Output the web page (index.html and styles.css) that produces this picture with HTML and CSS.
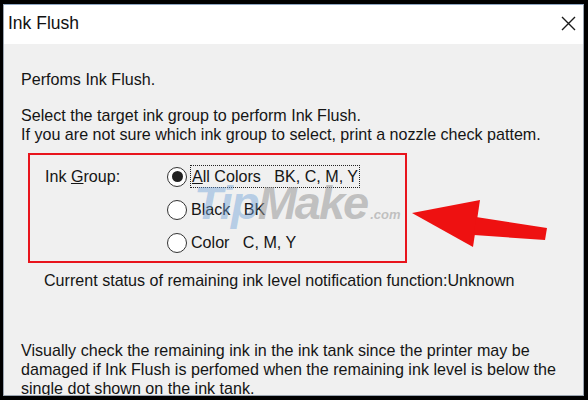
FILE: index.html
```html
<!DOCTYPE html>
<html lang="en">
<head>
  <meta charset="UTF-8">
  <meta name="viewport" content="width=device-width, initial-scale=1.0">
  <link rel="stylesheet" href="styles.css">
  <title>Ink Flush</title>
</head>
<body>
  <div class="window">
    <header class="title-bar">
      <h1>Ink Flush</h1>
      <svg class="close" width="15" height="15" viewBox="0 0 15 15">
        <path d="M1 1 L14 14 M14 1 L1 14" stroke="#1a1a1a" stroke-width="1.4" fill="none"/>
      </svg>
    </header>
    <main class="content">
      <p class="intro">Perfoms Ink Flush.</p>
      <p class="lead">Select the target ink group to perform Ink Flush.<br>If you are not sure which ink group to select, print a nozzle check pattem.</p>

      <section class="ink-group">
        <span class="group-label">Ink <u>G</u>roup:</span>
        <div class="options">
          <label class="option">
            <span class="radio checked"></span>
            <span class="focus"><u>A</u>ll Colors&nbsp;&nbsp; BK, C, M, Y</span>
          </label>
          <label class="option">
            <span class="radio"></span>
            <span>Black&nbsp;&nbsp; BK</span>
          </label>
          <label class="option">
            <span class="radio"></span>
            <span>Color&nbsp;&nbsp; C, M, Y</span>
          </label>
        </div>
      </section>

      <p class="status">Current status of remaining ink level notification function:Unknown</p>

      <p class="warning">Visually check the remaining ink in the ink tank since the printer may be<br>damaged if Ink Flush is perfomed when the remaining ink level is below the<br>single dot shown on the ink tank.</p>
    </main>

    <div class="watermark"><span class="tip">Tip</span>Make<small>.com</small></div>

    <svg class="arrow" width="150" height="60" viewBox="0 0 150 60">
      <polygon points="8,18 76,5 69,52" fill="#ee1111"/>
      <polygon points="72,22 143,33 141,45 70,40" fill="#ee1111"/>
    </svg>
  </div>
</body>
</html>
```

FILE: styles.css
```css
:root {
  --color-frame: #000;
  --color-border: #9aa4b0;
  --color-panel: #f0f0f0;
  --color-text: #151515;
  --color-red: #e8141c;
}

* {
  margin: 0;
  padding: 0;
  box-sizing: border-box;
}

html, body {
  width: 588px;
  height: 400px;
  overflow: hidden;
}

body {
  background-color: var(--color-frame);
  padding: 4px 4px 4px 3px;
  font-family: "Liberation Sans", Arial, sans-serif;
  font-size: 16.1px;
  color: var(--color-text);
}

.window {
  position: relative;
  height: 100%;
  border: 1px solid var(--color-border);
  border-top-color: #8ea6c2;
  background-color: var(--color-panel);
  overflow: hidden;
}

.title-bar {
  display: flex;
  align-items: center;
  justify-content: space-between;
  height: 39px;
  padding: 0 7px 3px 4px;
  background-color: #fff;
}

.title-bar h1 {
  font-size: 17.5px;
  font-weight: 400;
  color: #111;
}

.content {
  padding: 26px 0 0 17px;
  line-height: 19px;
  white-space: nowrap;
}

.lead {
  margin-top: 17px;
}

.ink-group {
  display: flex;
  width: 379px;
  height: 110px;
  margin: 9px 0 0 7px;
  padding: 9px 0 0 15px;
  border: 2px solid var(--color-red);
}

.group-label {
  width: 122px;
  padding-top: 3px;
}

.options {
  display: grid;
  gap: 8px;
  align-content: start;
}

.option {
  display: flex;
  align-items: center;
  gap: 4px;
  height: 25px;
}

.radio {
  position: relative;
  width: 20px;
  height: 20px;
  border: 1.5px solid #333;
  border-radius: 50%;
  background-color: #fff;
}

.radio.checked::after {
  content: "";
  position: absolute;
  inset: 3.5px;
  border-radius: 50%;
  background-color: #222;
}

.focus {
  outline: 1px dotted #222;
  outline-offset: 0;
  padding: 1px 1px;
}

.status {
  margin: 8px 0 0 23px;
}

.warning {
  margin-top: 51px;
}

.watermark {
  position: absolute;
  left: 190px;
  top: 170px;
  font-family: "Liberation Sans", sans-serif;
  font-size: 47px;
  font-weight: 700;
  font-style: italic;
  color: rgba(150, 150, 150, 0.55);
  pointer-events: none;
  letter-spacing: -2px;
}

.watermark .tip {
  color: rgba(110, 160, 215, 0.45);
}

.watermark small {
  font-size: 13px;
  letter-spacing: 0;
  margin-left: 3px;
}

.arrow {
  position: absolute;
  left: 400px;
  top: 190px;
}
```
